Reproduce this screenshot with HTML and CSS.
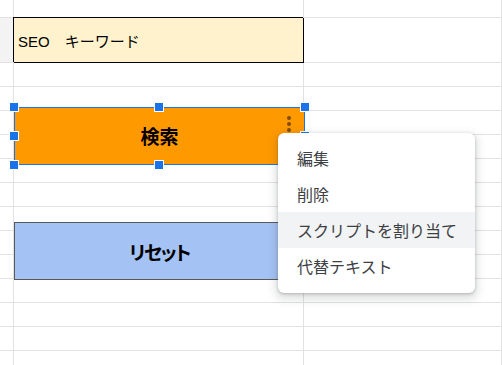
FILE: index.html
```html
<!DOCTYPE html>
<html lang="ja">
<head>
  <meta charset="UTF-8" />
  <meta name="viewport" content="width=device-width, initial-scale=1.0" />
  <title>ボタン</title>
  <link rel="stylesheet" href="styles.css">
</head>
<body>
  <div class="sheet">
    <div class="row row-top"><div class="cell col-a"></div><div class="cell col-b"></div><div class="cell col-c"></div></div>
    <div class="row row-tall">
      <div class="cell col-a active"></div>
      <div class="cell col-b keyword">SEO　キーワード</div>
      <div class="cell col-c"></div>
    </div>
    <div class="row"><div class="cell col-a"></div><div class="cell col-b"></div><div class="cell col-c"></div></div>
    <div class="row"><div class="cell col-a"></div><div class="cell col-b"></div><div class="cell col-c"></div></div>
    <div class="row"><div class="cell col-a"></div><div class="cell col-b"></div><div class="cell col-c"></div></div>
    <div class="row"><div class="cell col-a"></div><div class="cell col-b"></div><div class="cell col-c"></div></div>
    <div class="row"><div class="cell col-a"></div><div class="cell col-b"></div><div class="cell col-c"></div></div>
    <div class="row"><div class="cell col-a"></div><div class="cell col-b"></div><div class="cell col-c"></div></div>
    <div class="row"><div class="cell col-a"></div><div class="cell col-b"></div><div class="cell col-c"></div></div>
    <div class="row"><div class="cell col-a"></div><div class="cell col-b"></div><div class="cell col-c"></div></div>
    <div class="row"><div class="cell col-a"></div><div class="cell col-b"></div><div class="cell col-c"></div></div>
    <div class="row"><div class="cell col-a"></div><div class="cell col-b"></div><div class="cell col-c"></div></div>
    <div class="row"><div class="cell col-a"></div><div class="cell col-b"></div><div class="cell col-c"></div></div>
    <div class="row"><div class="cell col-a"></div><div class="cell col-b"></div><div class="cell col-c"></div></div>
    <div class="row"><div class="cell col-a"></div><div class="cell col-b"></div><div class="cell col-c"></div></div>
  </div>

  <!-- drawings over the sheet -->
  <div class="drawing btn-search selected">
    検索
    <span class="kebab"><i></i><i></i><i></i></span>
    <span class="handle h-tl"></span>
    <span class="handle h-tc"></span>
    <span class="handle h-tr"></span>
    <span class="handle h-ml"></span>
    <span class="handle h-mr"></span>
    <span class="handle h-bl"></span>
    <span class="handle h-bc"></span>
  </div>

  <div class="drawing btn-reset">リセット</div>

  <ul class="menu">
    <li>編集</li>
    <li>削除</li>
    <li class="hover">スクリプトを割り当て</li>
    <li>代替テキスト</li>
  </ul>
</body>
</html>
```

FILE: styles.css
```css
:root {
  --grid: #e2e2e2;
  --blue: #1a73e8;
  --menu-text: #3c4043;
}

body {
  margin: 0;
  width: 502px;
  height: 365px;
  overflow: hidden;
  position: relative;
  background: #fff;
  font-family: "Liberation Sans", "Noto Sans CJK JP", sans-serif;
}

.sheet {
  display: flex;
  flex-direction: column;
}

.row {
  display: flex;
  height: 24px;
  flex: none;
}

.row-top {
  height: 18px;
}

.row-tall {
  height: 45px;
}

.cell {
  box-sizing: border-box;
  border-right: 1px solid var(--grid);
  border-bottom: 1px solid var(--grid);
}

.col-a {
  width: 14px;
}

.col-a.active {
  background: #f3f3f3;
}

.col-b {
  width: 290px;
}

.col-c {
  flex: 1;
}

.keyword {
  background: #fff2cc;
  border-right-color: #000;
  border-bottom-color: #000;
  box-shadow: -1px -1px 0 0 #000;
  display: flex;
  align-items: center;
  padding-left: 4px;
  font-size: 15px;
  color: #000;
}

.drawing {
  position: absolute;
  box-sizing: border-box;
  display: flex;
  align-items: center;
  justify-content: center;
  font-family: "Noto Sans CJK JP", sans-serif;
  font-weight: bold;
  font-size: 19px;
  color: #000;
  font-feature-settings: "palt";
}

.btn-search {
  left: 14px;
  top: 107px;
  width: 291px;
  height: 58px;
  background: #ff9900;
  border: 1px solid var(--blue);
  padding-bottom: 2px;
}

.btn-reset {
  left: 14px;
  top: 222px;
  width: 291px;
  height: 58px;
  background: #a4c2f4;
  border: 1px solid #595959;
  letter-spacing: -1.5px;
}

.kebab {
  position: absolute;
  right: 13px;
  top: 8px;
  display: flex;
  flex-direction: column;
  gap: 2px;
}

.kebab i {
  width: 4px;
  height: 4px;
  border-radius: 50%;
  background: #7f4c00;
}

.handle {
  position: absolute;
  width: 8px;
  height: 8px;
  background: var(--blue);
  border: 1px solid #fff;
}

.h-tl { left: -6px; top: -6px; }
.h-tc { left: 139px; top: -6px; }
.h-tr { right: -6px; top: -6px; }
.h-ml { left: -6px; top: 23px; }
.h-mr { right: -6px; top: 23px; }
.h-bl { left: -6px; bottom: -6px; }
.h-bc { left: 139px; bottom: -6px; }

.menu {
  position: absolute;
  left: 278px;
  top: 133px;
  width: 197px;
  margin: 0;
  padding: 7px 0 9px;
  list-style: none;
  background: #fff;
  border-radius: 6px;
  box-shadow: 0 1px 3px rgba(60, 64, 67, 0.3), 0 4px 8px 3px rgba(60, 64, 67, 0.15);
  font-family: "Noto Sans CJK JP", sans-serif;
  font-size: 16px;
  color: var(--menu-text);
}

.menu li {
  height: 36px;
  line-height: 36px;
  padding-left: 19px;
}

.menu li.hover {
  background: #f1f3f4;
}
```
